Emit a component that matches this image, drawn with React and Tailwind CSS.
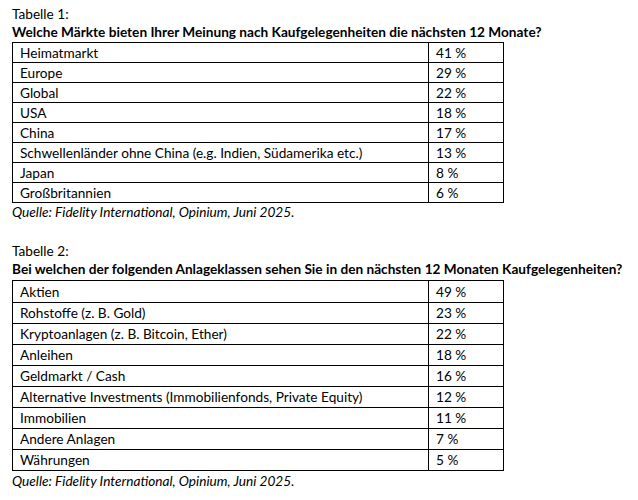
import React from "react";

const t1 = [
  ["Heimatmarkt", "41 %"],
  ["Europe", "29 %"],
  ["Global", "22 %"],
  ["USA", "18 %"],
  ["China", "17 %"],
  ["Schwellenländer ohne China (e.g. Indien, Südamerika etc.)", "13 %"],
  ["Japan", "8 %"],
  ["Großbritannien", "6 %"],
];

const t2 = [
  ["Aktien", "49 %"],
  ["Rohstoffe (z. B. Gold)", "23 %"],
  ["Kryptoanlagen (z. B. Bitcoin, Ether)", "22 %"],
  ["Anleihen", "18 %"],
  ["Geldmarkt / Cash", "16 %"],
  ["Alternative Investments (Immobilienfonds, Private Equity)", "12 %"],
  ["Immobilien", "11 %"],
  ["Andere Anlagen", "7 %"],
  ["Währungen", "5 %"],
];

function Table({ rows, rowH, firstH }) {
  return (
    <div className="w-[492px] border-x border-t border-black">
      {rows.map(([a, b], i) => (
        <div
          key={i}
          className={`flex items-stretch border-b border-black ${i === 0 ? firstH : rowH}`}
        >
          <div className="w-[416px] flex items-center pl-[7px] border-r border-black">{a}</div>
          <div className="flex-1 flex items-center pl-[7px]">{b}</div>
        </div>
      ))}
    </div>
  );
}

export default function App() {
  return (
    <div
      className="w-[638px] h-[500px] bg-white text-black pl-[12px] pt-[5px] text-[13.65px] leading-[18px]"
      style={{ fontFamily: "Lato, 'Noto Sans', sans-serif" }}
    >
      <div className="h-[18px]">Tabelle 1:</div>
      <div className="font-bold h-[19px]">
        Welche Märkte bieten Ihrer Meinung nach Kaufgelegenheiten die nächsten 12 Monate?
      </div>
      <Table rows={t1} rowH="h-[20px]" firstH="h-[20px]" />
      <div className="italic mt-[3px] h-[12px] leading-[12px]">Quelle: Fidelity International, Opinium, Juni 2025.</div>
      <div className="mt-[24px] h-[18px]">Tabelle 2:</div>
      <div className="font-bold h-[20px]">
        Bei welchen der folgenden Anlageklassen sehen Sie in den nächsten 12 Monaten Kaufgelegenheiten?
      </div>
      <Table rows={t2} rowH="h-[21px]" firstH="h-[22px]" />
      <div className="italic mt-[4px] h-[12px] leading-[12px]">Quelle: Fidelity International, Opinium, Juni 2025.</div>
    </div>
  );
}
